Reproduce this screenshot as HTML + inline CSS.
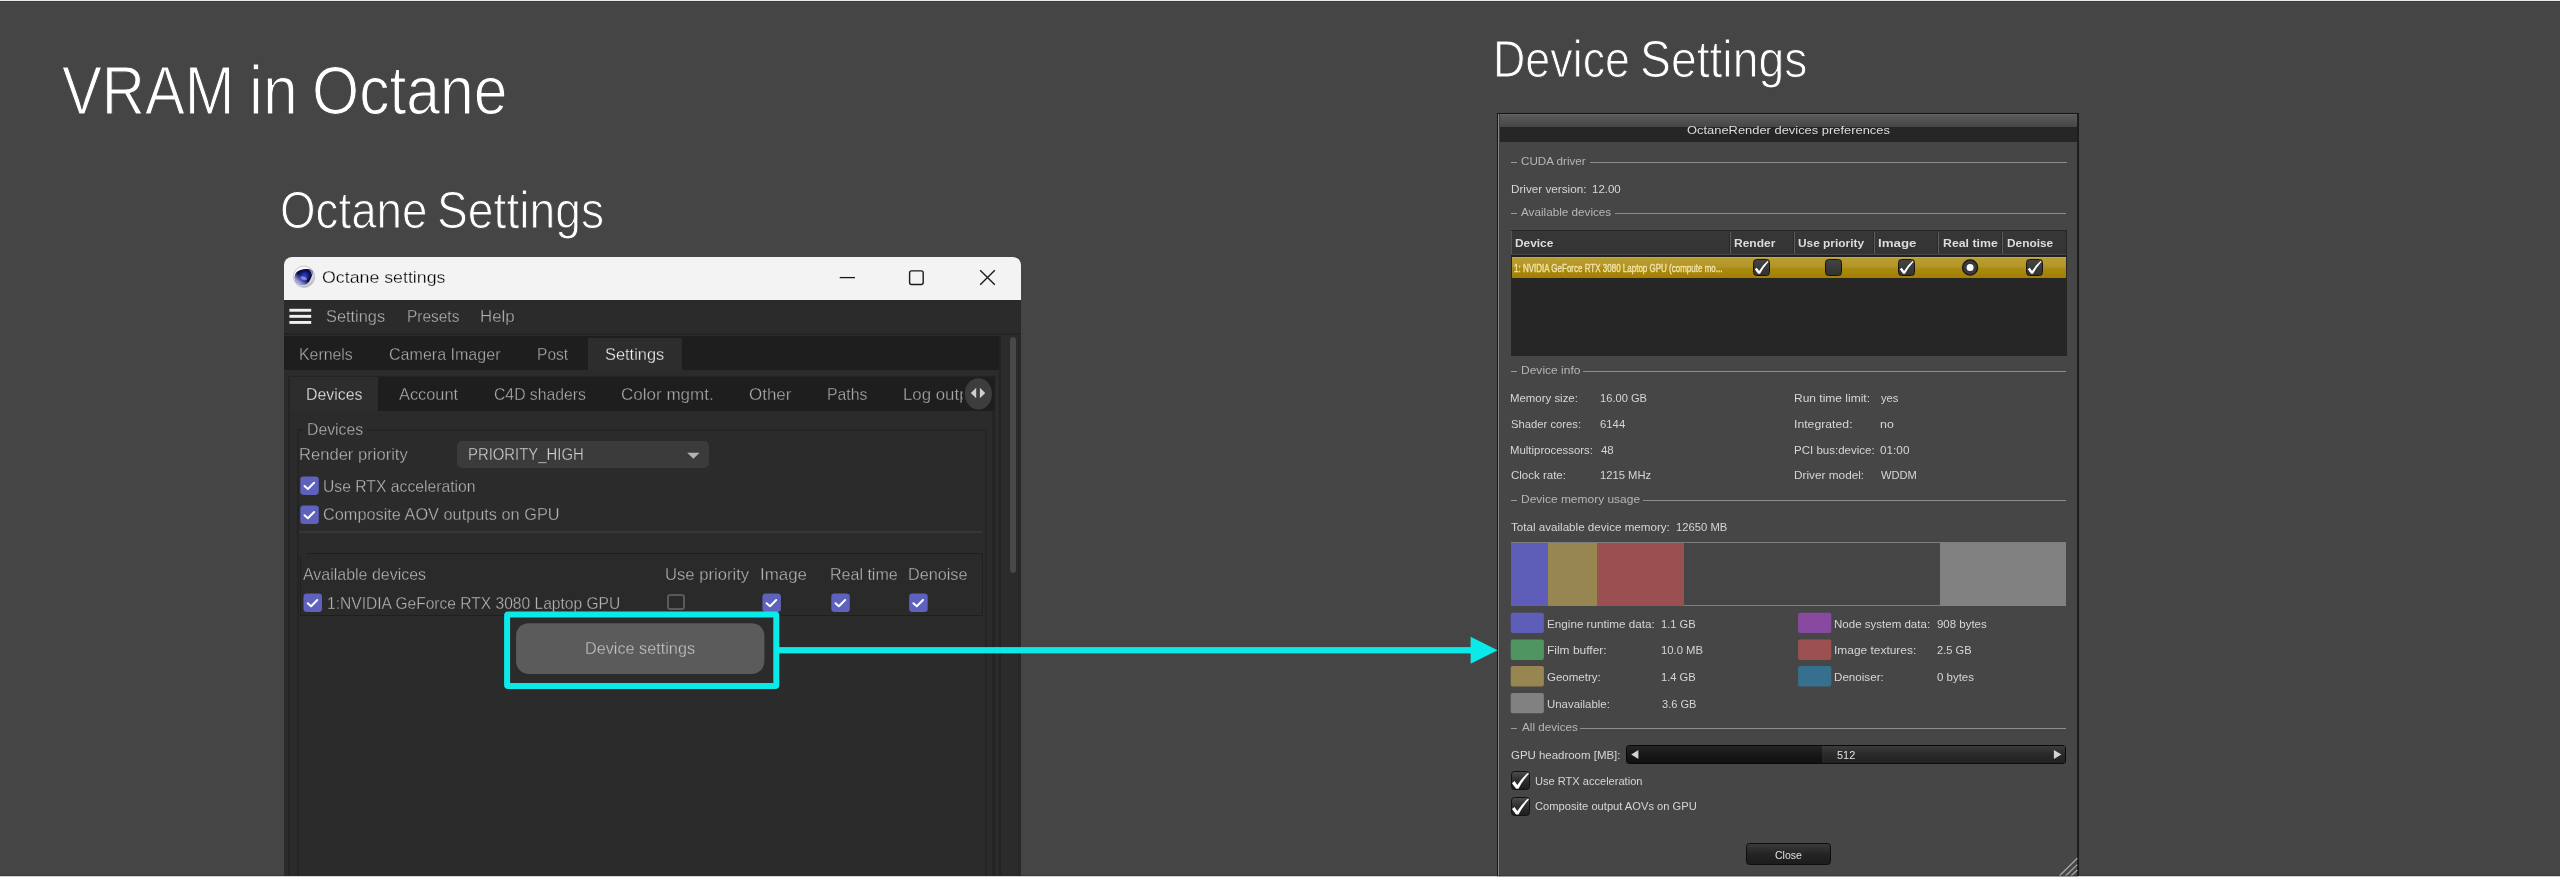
<!DOCTYPE html>
<html lang="en">
<head>
<meta charset="utf-8">
<title>VRAM in Octane</title>
<style>
html,body{margin:0;padding:0;width:2560px;height:877px;overflow:hidden}
body{width:2560px;height:877px;background:#454545;position:relative;overflow:hidden;font-family:"Liberation Sans",sans-serif}
.t{position:absolute;white-space:pre;transform-origin:0 0}
.b{position:absolute}
.fat{-webkit-text-stroke:0.4px #f3e3a6}
.thin3{-webkit-text-stroke:1.2px #454545}
.thin2{-webkit-text-stroke:1px #454545}
.cb{position:absolute;width:19px;height:19px;border-radius:3.5px;background:#5f62bd}
.cb svg{position:absolute;left:0;top:0}
.sw{position:absolute;width:33.4px;height:20.6px;border-radius:2px}
.sec{position:absolute;height:1.4px;background:#8e8e8e}
.dash{position:absolute;height:1.4px;width:6.4px;left:1510.6px;background:#9a9a9a}
.ocb{position:absolute;width:17px;height:16.6px;border-radius:3.5px;background:linear-gradient(#444 0,#3a3a3a 50%,#333 100%);border:1px solid #141414;box-sizing:border-box}
.ocb svg{position:absolute;left:-1px;top:-1px}
.vs{position:absolute;top:232px;height:22px;width:1.2px;background:#5c5c5c;box-shadow:-1px 0 0 #2a2a2a}
</style>
</head>
<body>
<!-- top edge -->
<div class="b" style="left:0;top:0;width:2560px;height:1px;background:#e9e9e9"></div>
<div class="b" style="left:0;top:1px;width:2560px;height:1px;background:#3a3a3a"></div>

<!-- ================= LEFT WINDOW ================= -->
<div class="b" id="win" style="left:284px;top:257px;width:737px;height:620px;background:#2b2b2b;border-radius:8px 8px 0 0;overflow:hidden">
  <div class="b" style="left:0;top:0;width:737px;height:43px;background:#f3f3f3"></div>
  <div class="b" style="left:0;top:76px;width:737px;height:1.5px;background:#242424"></div>
  <!-- tab bar 1 -->
  <div class="b" style="left:0;top:79px;width:717px;height:33.5px;background:#1e1e1e"></div>
  <div class="b" style="left:304px;top:81px;width:94.3px;height:31.5px;background:#2d2d2d"></div>
  <!-- inner panel -->
  <div class="b" style="left:4px;top:119px;width:707px;height:510px;background:#2b2b2b;border:2px solid #242424;box-sizing:border-box"></div>
  <div class="b" style="left:5.5px;top:119.5px;width:705px;height:34px;background:#1e1e1e"></div>
  <div class="b" style="left:5.5px;top:119.5px;width:88.7px;height:34px;background:#2d2d2d"></div>
  <!-- group box -->
  <div class="b" style="left:13px;top:172px;width:690px;height:460px;border:2px solid #242424;box-sizing:border-box"></div>
  <div class="b" style="left:18.5px;top:170px;width:64px;height:6px;background:#2b2b2b"></div>
  <!-- dropdown -->
  <div class="b" style="left:173px;top:183.7px;width:252px;height:27.3px;background:#3b3b3b;border-radius:5px"></div>
  <svg class="b" style="left:402px;top:194px" width="16" height="10" viewBox="0 0 16 10"><path d="M1.2 1.8 L13.6 1.8 L7.4 7.8 Z" fill="#b4b4b4"/></svg>
  <!-- separator -->
  <div class="b" style="left:15px;top:274.3px;width:683px;height:1.4px;background:#363636"></div>
  <!-- nested group -->
  <div class="b" style="left:15.5px;top:295.5px;width:683px;height:63.5px;border:1px solid #212121;border-top-color:#1e1e1e;border-bottom:1.4px solid #1f1f1f;box-sizing:border-box;background:#2a2a2a"></div>
  <div class="b" style="left:15.5px;top:294px;width:6px;height:4px;background:#2b2b2b"></div>
  <!-- unchecked box -->
  <div class="b" style="left:382.7px;top:337.3px;width:18px;height:16.2px;border:2.2px solid #5a5a5a;border-radius:3px;box-sizing:border-box"></div>
  <!-- button -->
  <svg class="b" style="left:230px;top:360px" width="260" height="64" viewBox="0 0 260 64"><rect x="2.1" y="6.2" width="248.3" height="50.8" rx="12.5" fill="#5b5b5b"/></svg>
  <!-- scrollbar -->
  <div class="b" style="left:715px;top:79px;width:1.5px;height:541px;background:#232323"></div>
  <div class="b" style="left:734px;top:79px;width:3px;height:541px;background:#292929"></div>
  <div class="b" style="left:725.8px;top:79.5px;width:6.3px;height:236.2px;background:#494949;border-radius:3.2px"></div>
  <!-- vertical subtle lines -->
  <div class="b" style="left:708.2px;top:154px;width:1.3px;height:470px;background:#252525"></div>
</div>
<!-- checkboxes (page coords) -->
<svg class="b" style="left:290px;top:470px" width="650" height="150" viewBox="0 0 650 150">
<g transform="translate(10.3 6.4)"><rect width="18.5" height="18.5" rx="3.3" fill="#5f62bd"/><path d="M4.2 9.6 L7.6 12.6 L13.8 6.4" fill="none" stroke="#fff" stroke-width="2" stroke-linecap="round" stroke-linejoin="round"/></g>
<g transform="translate(10.3 35.6)"><rect width="18.5" height="18.5" rx="3.3" fill="#5f62bd"/><path d="M4.2 9.6 L7.6 12.6 L13.8 6.4" fill="none" stroke="#fff" stroke-width="2" stroke-linecap="round" stroke-linejoin="round"/></g>
<g transform="translate(13.5 123.6)"><rect width="18.5" height="18.5" rx="3.3" fill="#5f62bd"/><path d="M4.2 9.6 L7.6 12.6 L13.8 6.4" fill="none" stroke="#fff" stroke-width="2" stroke-linecap="round" stroke-linejoin="round"/></g>
<g transform="translate(472.4 123.6)"><rect width="18.5" height="18.5" rx="3.3" fill="#5f62bd"/><path d="M4.2 9.6 L7.6 12.6 L13.8 6.4" fill="none" stroke="#fff" stroke-width="2" stroke-linecap="round" stroke-linejoin="round"/></g>
<g transform="translate(541.3 123.6)"><rect width="18.5" height="18.5" rx="3.3" fill="#5f62bd"/><path d="M4.2 9.6 L7.6 12.6 L13.8 6.4" fill="none" stroke="#fff" stroke-width="2" stroke-linecap="round" stroke-linejoin="round"/></g>
<g transform="translate(619.2 123.6)"><rect width="18.5" height="18.5" rx="3.3" fill="#5f62bd"/><path d="M4.2 9.6 L7.6 12.6 L13.8 6.4" fill="none" stroke="#fff" stroke-width="2" stroke-linecap="round" stroke-linejoin="round"/></g>
</svg>

<!-- window icons -->
<svg class="b" style="left:284px;top:257px" width="737" height="80" viewBox="0 0 737 80">
  <defs>
    <radialGradient id="g1" cx="0.36" cy="0.28" r="0.85"><stop offset="0" stop-color="#ffffff"/><stop offset="0.5" stop-color="#f4f4f8"/><stop offset="0.8" stop-color="#c6c6cf"/><stop offset="1" stop-color="#a4a4b0"/></radialGradient>
    <radialGradient id="g2" cx="0.55" cy="0.44" r="0.6"><stop offset="0" stop-color="#3040c4"/><stop offset="0.3" stop-color="#1d2698"/><stop offset="0.62" stop-color="#090a36"/><stop offset="0.85" stop-color="#0c0e48"/><stop offset="1" stop-color="#23257a"/></radialGradient>
    <linearGradient id="g3" x1="1" y1="0" x2="0.1" y2="1"><stop offset="0.55" stop-color="#9a9af0" stop-opacity="0"/><stop offset="0.85" stop-color="#a4a4f4" stop-opacity="0.95"/><stop offset="1" stop-color="#c8c8ff"/></linearGradient>
    <filter id="bl" x="-20%" y="-20%" width="140%" height="140%"><feGaussianBlur stdDeviation="0.35"/></filter>
    <filter id="bl2" x="-50%" y="-50%" width="200%" height="200%"><feGaussianBlur stdDeviation="0.7"/></filter>
  </defs>
  <g filter="url(#bl)">
  <circle cx="20" cy="19.7" r="10.7" fill="url(#g1)" stroke="#b9b9c4" stroke-width="0.7"/>
  <path id="blob" d="M10.7 20.4 C10.6 16.8 12.6 14.6 15.2 13.4 C18 12.2 21 11.9 23.6 11.9 C25.6 11.9 27.4 12.8 28.5 14.2 C28.6 16.4 28.2 18 27.6 19.6 C26.9 21.8 26 23.8 24.4 25.4 C22.8 26.9 21 27.6 19.2 27.6 C16.4 27.7 14 27 12.5 25.4 C11.4 24.2 10.8 22.4 10.7 20.4 Z" fill="url(#g2)"/>
  <path d="M10.7 20.4 C10.6 16.8 12.6 14.6 15.2 13.4 C18 12.2 21 11.9 23.6 11.9 C25.6 11.9 27.4 12.8 28.5 14.2 C28.6 16.4 28.2 18 27.6 19.6 C26.9 21.8 26 23.8 24.4 25.4 C22.8 26.9 21 27.6 19.2 27.6 C16.4 27.7 14 27 12.5 25.4 C11.4 24.2 10.8 22.4 10.7 20.4 Z" fill="url(#g3)"/>
  <path d="M24.6 12.2 C26.6 12.6 28 13.4 28.4 14.4 C28.5 16 28.2 17.4 27.8 18.6 C27.4 16 26.4 13.8 24.6 12.2Z" fill="#8d8fe2" opacity="0.9"/>
  </g>
  <ellipse cx="19.8" cy="21.3" rx="3.2" ry="1.7" transform="rotate(22 19.8 21.3)" fill="#7f8cf0" filter="url(#bl2)"/>
  <!-- min / max / close -->
  <path d="M555.7 20.6 H571" stroke="#1a1a1a" stroke-width="1.3" fill="none"/>
  <rect x="625.6" y="13.9" width="13.6" height="13.6" rx="2" fill="none" stroke="#1a1a1a" stroke-width="1.4"/>
  <path d="M696.2 13.2 L710.8 27.8 M710.8 13.2 L696.2 27.8" stroke="#1a1a1a" stroke-width="1.4" fill="none"/>
  <!-- hamburger -->
  <rect x="5.4" y="51.8" width="21.8" height="2.9" fill="#f0f0f0"/>
  <rect x="5.4" y="57.9" width="21.8" height="2.9" fill="#f0f0f0"/>
  <rect x="5.4" y="64" width="21.8" height="2.9" fill="#f0f0f0"/>
</svg>
<!-- scroll tab button + clipped "Log outp" -->
<div class="b" style="left:890px;top:377px;width:73.3px;height:34px;overflow:hidden;will-change:transform"><span class="t" style="left:13.4px;top:6px;font-size:16.6px;line-height:23px;color:#aaaaaa;-webkit-text-stroke:0.3px #1e1e1e;transform:scaleX(1.014)">Log output</span></div>
<svg class="b" style="left:962px;top:376px" width="34" height="36" viewBox="0 0 34 36">
  <ellipse cx="16.4" cy="17.9" rx="13.6" ry="15.6" fill="#3d3d3d"/>
  <path d="M8.8 17 L14.2 11.8 L14.2 22.2 Z" fill="#cfcfcf"/>
  <path d="M23.2 17 L17.9 11.8 L17.9 22.2 Z" fill="#cfcfcf"/>
</svg>

<!-- ================= RIGHT PANEL ================= -->
<div class="b" style="left:1497px;top:113px;width:581.5px;height:764px;background:#464646;border:1px solid #151515;border-right:2px solid #1d1d1d;border-bottom:none;box-sizing:border-box"></div>
<div class="b" style="left:1498px;top:114px;width:1px;height:763px;background:#8a8a8a"></div>
<div class="b" style="left:1499px;top:114px;width:1px;height:763px;background:#3e3e3e"></div>
<div class="b" style="left:1500px;top:114px;width:576.5px;height:13.2px;background:linear-gradient(#6c6c6c 0,#5a5a5a 9%,#464646 100%)"></div>
<div class="b" style="left:1500px;top:127.2px;width:576.5px;height:14.6px;background:#262626"></div>
<!-- section rules -->
<div class="dash" style="top:161.6px"></div><div class="sec" style="left:1589.5px;top:161.6px;width:477px"></div>
<div class="dash" style="top:213px"></div><div class="sec" style="left:1614.7px;top:213px;width:451.8px"></div>
<div class="dash" style="top:370.8px"></div><div class="sec" style="left:1583.4px;top:370.8px;width:483px"></div>
<div class="dash" style="top:499.5px"></div><div class="sec" style="left:1642.6px;top:499.5px;width:423.9px"></div>
<div class="dash" style="top:727.9px"></div><div class="sec" style="left:1580.4px;top:727.9px;width:486px"></div>
<!-- table -->
<div class="b" style="left:1510.5px;top:230px;width:556px;height:125.5px;background:#262626"></div>
<div class="b" style="left:1511px;top:231px;width:555.3px;height:23px;background:linear-gradient(#373737,#343434)"></div>
<div class="b" style="left:1511px;top:231px;width:1.2px;height:24px;background:#585858"></div>
<div class="b" style="left:1511px;top:254px;width:555.3px;height:1px;background:#474747"></div>
<div class="b" style="left:1511px;top:255px;width:555.3px;height:2px;background:#202020"></div>
<div class="b" style="left:1511.7px;top:256.8px;width:554.6px;height:21.2px;background:linear-gradient(#cdb352 0,#b99d2e 6%,#b3962a 45%,#aa8a10 55%,#a27f02 100%)"></div>
<div class="vs" style="left:1729.5px"></div><div class="vs" style="left:1793.5px"></div><div class="vs" style="left:1873.5px"></div><div class="vs" style="left:1937.7px"></div><div class="vs" style="left:2001.7px"></div>
<div class="ocb" style="left:1753.2px;top:259.2px"><svg width="17" height="17" viewBox="-1.2 -0.6 21 21"><path d="M1 12.2 L3.5 10.1 L6.3 14.1 Q11 6.6 17.1 1.7 L17.9 2.7 Q11.6 9.6 7.5 17.7 L5.1 17.7 Z" fill="#fff"/></svg></div>
<div class="ocb" style="left:1825px;top:259.2px"></div>
<div class="ocb" style="left:1897.5px;top:259.2px"><svg width="17" height="17" viewBox="-1.2 -0.6 21 21"><path d="M1 12.2 L3.5 10.1 L6.3 14.1 Q11 6.6 17.1 1.7 L17.9 2.7 Q11.6 9.6 7.5 17.7 L5.1 17.7 Z" fill="#fff"/></svg></div>
<div class="ocb" style="left:2025.7px;top:259.2px"><svg width="17" height="17" viewBox="-1.2 -0.6 21 21"><path d="M1 12.2 L3.5 10.1 L6.3 14.1 Q11 6.6 17.1 1.7 L17.9 2.7 Q11.6 9.6 7.5 17.7 L5.1 17.7 Z" fill="#fff"/></svg></div>
<svg class="b" style="left:1960px;top:258px" width="20" height="20" viewBox="0 0 20 20"><circle cx="10.1" cy="9.5" r="7.6" fill="#3a3a3a" stroke="#141414" stroke-width="1.2"/><circle cx="10.1" cy="9.5" r="3.5" fill="#fff"/></svg>
<!-- memory bar -->
<div class="b" style="left:1510.6px;top:542.2px;width:555.9px;height:63.4px;background:#454545;border-top:1.2px solid #7e7e7e;border-bottom:1.2px solid #7e7e7e;box-sizing:border-box"></div>
<div class="b" style="left:1510.6px;top:542.6px;width:37.1px;height:63px;background:#5e5eb8"></div>
<div class="b" style="left:1547.7px;top:542.6px;width:49.5px;height:63px;background:#978651"></div>
<div class="b" style="left:1597.2px;top:542.6px;width:86.6px;height:63px;background:#9a5050"></div>
<div class="b" style="left:1940.3px;top:542.6px;width:126.2px;height:63px;background:#818181"></div>
<!-- legend swatches -->
<svg class="b" style="left:1500px;top:600px" width="340" height="120" viewBox="0 0 340 120">
<rect x="10.7" y="12.7" width="33.2" height="20.2" rx="2" fill="#5e5eb8"/><rect x="10.7" y="39.4" width="33.2" height="20.5" rx="2" fill="#4f9561"/><rect x="10.7" y="66.1" width="33.2" height="20.3" rx="2" fill="#978651"/><rect x="10.7" y="92.9" width="33.2" height="20.3" rx="2" fill="#818181"/><rect x="298.1" y="12.7" width="33.2" height="20.2" rx="2" fill="#8849a0"/><rect x="298.1" y="39.4" width="33.2" height="20.5" rx="2" fill="#9c5050"/><rect x="298.1" y="66.1" width="33.2" height="20.3" rx="2" fill="#36708e"/>
</svg>
<!-- slider -->
<div class="b" style="left:1626px;top:745px;width:440px;height:19px;border-radius:3.5px;background:#090909;overflow:hidden">
  <div class="b" style="left:1px;top:1px;width:194.5px;height:17px;background:linear-gradient(#242424 0,#181818 50%,#101010 100%)"></div>
  <div class="b" style="left:195.5px;top:1px;width:243.5px;height:17px;background:linear-gradient(#3b3b3b 0,#2b2b2b 45%,#212121 100%)"></div>
</div>
<svg class="b" style="left:1626px;top:745px" width="441" height="19" viewBox="0 0 441 19"><path d="M5.2 9.5 L12.4 5 L12.4 14 Z" fill="#d4d4d4"/><path d="M435.4 9.5 L427.9 5 L427.9 14 Z" fill="#d4d4d4"/></svg>
<!-- bottom checkboxes -->
<div class="b" style="left:1510.8px;top:771.2px;width:19px;height:18.6px;border-radius:3.5px;background:linear-gradient(#4b4b4b 0,#303030 45%,#1d1d1d 100%);border:1px solid #111;box-sizing:border-box"></div>
<div class="b" style="left:1510.8px;top:797.1px;width:19px;height:18.6px;border-radius:3.5px;background:linear-gradient(#4b4b4b 0,#303030 45%,#1d1d1d 100%);border:1px solid #111;box-sizing:border-box"></div>
<svg class="b" style="left:1511.2px;top:771px" width="20" height="46" viewBox="0 0 20 46"><path d="M1 12.2 L3.5 10.1 L6.3 14.1 Q11 6.6 17.1 1.7 L17.9 2.7 Q11.6 9.6 7.5 17.7 L5.1 17.7 Z" fill="#fff"/><path transform="translate(0 25.9)" d="M1 12.2 L3.5 10.1 L6.3 14.1 Q11 6.6 17.1 1.7 L17.9 2.7 Q11.6 9.6 7.5 17.7 L5.1 17.7 Z" fill="#fff"/></svg>
<!-- close button -->
<div class="b" style="left:1745.8px;top:843.2px;width:85px;height:21.4px;border-radius:3.5px;background:linear-gradient(#3a3a3a 0,#242424 50%,#1c1c1c 100%);border:1px solid #0d0d0d;box-sizing:border-box"></div>
<!-- resize grip -->
<svg class="b" style="left:2056px;top:855px" width="22" height="22" viewBox="0 0 22 22"><path d="M3.3 21 L21.3 3.2 M9.5 21 L21.3 9.6 M15 21 L21.3 15" stroke="#a6a6a6" stroke-width="1.3" fill="none"/></svg>

<!-- ================= TEXT ================= -->
<div id="txt" style="position:absolute;left:0;top:0;width:2560px;height:877px;will-change:transform">
<span class="t thin3" style="left:62.08px;top:50.00px;font-size:69px;line-height:81px;color:#ffffff;transform:scaleX(0.8651)">VRAM</span>
<span class="t thin3" style="left:248.64px;top:50.00px;font-size:69px;line-height:81px;color:#ffffff;transform:scaleX(0.9071)">in</span>
<span class="t thin3" style="left:311.53px;top:50.00px;font-size:69px;line-height:81px;color:#ffffff;transform:scaleX(0.8790)">Octane</span>
<span class="t thin2" style="left:280.01px;top:179.00px;font-size:51.5px;line-height:62px;color:#ffffff;transform:scaleX(0.8882)">Octane</span>
<span class="t thin2" style="left:437.01px;top:179.00px;font-size:51.5px;line-height:62px;color:#ffffff;transform:scaleX(0.8979)">Settings</span>
<span class="t thin2" style="left:1493.16px;top:28.00px;font-size:51.5px;line-height:62px;color:#ffffff;transform:scaleX(0.8702)">Device</span>
<span class="t thin2" style="left:1639.70px;top:28.00px;font-size:51.5px;line-height:62px;color:#ffffff;transform:scaleX(0.8990)">Settings</span>
<span class="t" style="left:322.41px;top:265.00px;font-size:17.3px;line-height:24px;color:#000000;-webkit-text-stroke:0.3px #f3f3f3;transform:scaleX(1.0282)">Octane settings</span>
<span class="t" style="left:326.24px;top:305.00px;font-size:16.6px;line-height:23px;color:#b2b2b2;-webkit-text-stroke:0.3px #2b2b2b;transform:scaleX(0.9856)">Settings</span>
<span class="t" style="left:407.05px;top:305.00px;font-size:16.6px;line-height:23px;color:#b2b2b2;-webkit-text-stroke:0.3px #2b2b2b;transform:scaleX(0.9306)">Presets</span>
<span class="t" style="left:480.43px;top:305.00px;font-size:16.6px;line-height:23px;color:#b2b2b2;-webkit-text-stroke:0.3px #2b2b2b;transform:scaleX(1.0166)">Help</span>
<span class="t" style="left:298.52px;top:343.00px;font-size:16.6px;line-height:23px;color:#aaaaaa;-webkit-text-stroke:0.3px #1e1e1e;transform:scaleX(0.9563)">Kernels</span>
<span class="t" style="left:389.00px;top:343.00px;font-size:16.6px;line-height:23px;color:#aaaaaa;-webkit-text-stroke:0.3px #1e1e1e;transform:scaleX(0.9671)">Camera Imager</span>
<span class="t" style="left:537.44px;top:343.00px;font-size:16.6px;line-height:23px;color:#aaaaaa;-webkit-text-stroke:0.3px #1e1e1e;transform:scaleX(0.9376)">Post</span>
<span class="t" style="left:605.24px;top:343.00px;font-size:16.6px;line-height:23px;color:#f0f0f0;-webkit-text-stroke:0.3px #2d2d2d;transform:scaleX(0.9873)">Settings</span>
<span class="t" style="left:306.21px;top:383.00px;font-size:16.6px;line-height:23px;color:#f0f0f0;-webkit-text-stroke:0.3px #2d2d2d;transform:scaleX(0.9574)">Devices</span>
<span class="t" style="left:399.05px;top:383.00px;font-size:16.6px;line-height:23px;color:#aaaaaa;-webkit-text-stroke:0.3px #1e1e1e;transform:scaleX(0.9860)">Account</span>
<span class="t" style="left:494.02px;top:383.00px;font-size:16.6px;line-height:23px;color:#aaaaaa;-webkit-text-stroke:0.3px #1e1e1e;transform:scaleX(0.9488)">C4D shaders</span>
<span class="t" style="left:621.25px;top:383.00px;font-size:16.6px;line-height:23px;color:#aaaaaa;-webkit-text-stroke:0.3px #1e1e1e;transform:scaleX(1.0260)">Color mgmt.</span>
<span class="t" style="left:748.65px;top:383.00px;font-size:16.6px;line-height:23px;color:#aaaaaa;-webkit-text-stroke:0.3px #1e1e1e;transform:scaleX(1.0209)">Other</span>
<span class="t" style="left:826.52px;top:383.00px;font-size:16.6px;line-height:23px;color:#aaaaaa;-webkit-text-stroke:0.3px #1e1e1e;transform:scaleX(0.9521)">Paths</span>
<span class="t" style="left:306.52px;top:418.00px;font-size:16.6px;line-height:23px;color:#b4b4b4;-webkit-text-stroke:0.3px #2b2b2b;transform:scaleX(0.9521)">Devices</span>
<span class="t" style="left:298.85px;top:443.00px;font-size:16.6px;line-height:23px;color:#b4b4b4;-webkit-text-stroke:0.3px #2b2b2b;transform:scaleX(0.9994)">Render priority</span>
<span class="t" style="left:468.30px;top:443.00px;font-size:16.6px;line-height:23px;color:#d0d0d0;-webkit-text-stroke:0.3px #3b3b3b;transform:scaleX(0.8964)">PRIORITY_HIGH</span>
<span class="t" style="left:322.78px;top:475.00px;font-size:16.6px;line-height:23px;color:#b4b4b4;-webkit-text-stroke:0.3px #2b2b2b;transform:scaleX(0.9466)">Use RTX acceleration</span>
<span class="t" style="left:322.99px;top:503.00px;font-size:16.6px;line-height:23px;color:#b4b4b4;-webkit-text-stroke:0.3px #2b2b2b;transform:scaleX(0.9826)">Composite AOV outputs on GPU</span>
<span class="t" style="left:303.06px;top:563.00px;font-size:16.6px;line-height:23px;color:#b4b4b4;-webkit-text-stroke:0.3px #2b2b2b;transform:scaleX(0.9619)">Available devices</span>
<span class="t" style="left:664.71px;top:563.00px;font-size:16.6px;line-height:23px;color:#b4b4b4;-webkit-text-stroke:0.3px #2b2b2b;transform:scaleX(1.0024)">Use priority</span>
<span class="t" style="left:760.43px;top:563.00px;font-size:16.6px;line-height:23px;color:#b4b4b4;-webkit-text-stroke:0.3px #2b2b2b;transform:scaleX(1.0190)">Image</span>
<span class="t" style="left:830.00px;top:563.00px;font-size:16.6px;line-height:23px;color:#b4b4b4;-webkit-text-stroke:0.3px #2b2b2b;transform:scaleX(0.9655)">Real time</span>
<span class="t" style="left:907.99px;top:563.00px;font-size:16.6px;line-height:23px;color:#b4b4b4;-webkit-text-stroke:0.3px #2b2b2b;transform:scaleX(0.9772)">Denoise</span>
<span class="t" style="left:327.29px;top:592.00px;font-size:16.6px;line-height:23px;color:#b4b4b4;-webkit-text-stroke:0.3px #2b2b2b;transform:scaleX(0.9387)">1:NVIDIA GeForce RTX 3080 Laptop GPU</span>
<span class="t" style="left:584.89px;top:637.00px;font-size:16.6px;line-height:23px;color:#c4c4c4;-webkit-text-stroke:0.3px #5b5b5b;transform:scaleX(0.9779)">Device settings</span>
<span class="t" style="left:1686.90px;top:122.00px;font-size:11.6px;line-height:16px;color:#dedede;transform:scaleX(1.1125)">OctaneRender devices preferences</span>
<span class="t" style="left:1520.55px;top:153.00px;font-size:11.6px;line-height:16px;color:#b6b6b6;transform:scaleX(1.0032)">CUDA driver</span>
<span class="t" style="left:1510.59px;top:181.00px;font-size:11.6px;line-height:16px;color:#d6d6d6;transform:scaleX(1.0094)">Driver version:</span>
<span class="t" style="left:1591.78px;top:181.00px;font-size:11.6px;line-height:16px;color:#d6d6d6;transform:scaleX(0.9888)">12.00</span>
<span class="t" style="left:1521.10px;top:204.00px;font-size:11.6px;line-height:16px;color:#b6b6b6;transform:scaleX(1.0095)">Available devices</span>
<span class="t" style="left:1515.26px;top:234.00px;font-size:11.8px;line-height:18px;color:#dcdcdc;font-weight:700;transform:scaleX(1.0076)">Device</span>
<span class="t" style="left:1734.15px;top:234.00px;font-size:11.8px;line-height:18px;color:#dcdcdc;font-weight:700;transform:scaleX(1.0189)">Render</span>
<span class="t" style="left:1798.44px;top:234.00px;font-size:11.8px;line-height:18px;color:#dcdcdc;font-weight:700;transform:scaleX(1.0077)">Use priority</span>
<span class="t" style="left:1877.87px;top:234.00px;font-size:11.8px;line-height:18px;color:#dcdcdc;font-weight:700;transform:scaleX(1.1278)">Image</span>
<span class="t" style="left:1942.73px;top:234.00px;font-size:11.8px;line-height:18px;color:#dcdcdc;font-weight:700;transform:scaleX(1.0440)">Real time</span>
<span class="t" style="left:2006.56px;top:234.00px;font-size:11.8px;line-height:18px;color:#dcdcdc;font-weight:700;transform:scaleX(1.0073)">Denoise</span>
<span class="t fat" style="left:1514.14px;top:260.00px;font-size:11.2px;line-height:16px;color:#f1e2a8;transform:scaleX(0.7153)">1: NVIDIA GeForce RTX 3080 Laptop GPU (compute mo...</span>
<span class="t" style="left:1520.96px;top:362.00px;font-size:11.6px;line-height:16px;color:#b6b6b6;transform:scaleX(1.0374)">Device info</span>
<span class="t" style="left:1510.41px;top:390.00px;font-size:11.6px;line-height:16px;color:#d6d6d6;transform:scaleX(0.9849)">Memory size:</span>
<span class="t" style="left:1600.20px;top:390.00px;font-size:11.6px;line-height:16px;color:#d6d6d6;transform:scaleX(0.9603)">16.00 GB</span>
<span class="t" style="left:1793.56px;top:390.00px;font-size:11.6px;line-height:16px;color:#d6d6d6;transform:scaleX(1.0346)">Run time limit:</span>
<span class="t" style="left:1880.70px;top:390.00px;font-size:11.6px;line-height:16px;color:#d6d6d6;transform:scaleX(0.9667)">yes</span>
<span class="t" style="left:1510.95px;top:416.00px;font-size:11.6px;line-height:16px;color:#d6d6d6;transform:scaleX(0.9703)">Shader cores:</span>
<span class="t" style="left:1600.37px;top:416.00px;font-size:11.6px;line-height:16px;color:#d6d6d6;transform:scaleX(0.9771)">6144</span>
<span class="t" style="left:1793.54px;top:416.00px;font-size:11.6px;line-height:16px;color:#d6d6d6;transform:scaleX(1.0559)">Integrated:</span>
<span class="t" style="left:1879.93px;top:416.00px;font-size:11.6px;line-height:16px;color:#d6d6d6;transform:scaleX(1.0677)">no</span>
<span class="t" style="left:1510.41px;top:442.00px;font-size:11.6px;line-height:16px;color:#d6d6d6;transform:scaleX(0.9831)">Multiprocessors:</span>
<span class="t" style="left:1600.72px;top:442.00px;font-size:11.6px;line-height:16px;color:#d6d6d6;transform:scaleX(0.9876)">48</span>
<span class="t" style="left:1793.60px;top:442.00px;font-size:11.6px;line-height:16px;color:#d6d6d6;transform:scaleX(0.9926)">PCI bus:device:</span>
<span class="t" style="left:1880.33px;top:442.00px;font-size:11.6px;line-height:16px;color:#d6d6d6;transform:scaleX(1.0149)">01:00</span>
<span class="t" style="left:1510.76px;top:467.00px;font-size:11.6px;line-height:16px;color:#d6d6d6;transform:scaleX(0.9917)">Clock rate:</span>
<span class="t" style="left:1600.20px;top:467.00px;font-size:11.6px;line-height:16px;color:#d6d6d6;transform:scaleX(0.9690)">1215 MHz</span>
<span class="t" style="left:1793.58px;top:467.00px;font-size:11.6px;line-height:16px;color:#d6d6d6;transform:scaleX(1.0176)">Driver model:</span>
<span class="t" style="left:1880.70px;top:467.00px;font-size:11.6px;line-height:16px;color:#d6d6d6;transform:scaleX(0.9567)">WDDM</span>
<span class="t" style="left:1520.56px;top:491.00px;font-size:11.6px;line-height:16px;color:#b6b6b6;transform:scaleX(1.0322)">Device memory usage</span>
<span class="t" style="left:1511.12px;top:519.00px;font-size:11.6px;line-height:16px;color:#d6d6d6;transform:scaleX(1.0021)">Total available device memory:</span>
<span class="t" style="left:1676.20px;top:519.00px;font-size:11.6px;line-height:16px;color:#d6d6d6;transform:scaleX(0.9697)">12650 MB</span>
<span class="t" style="left:1546.89px;top:616.00px;font-size:11.6px;line-height:16px;color:#d6d6d6;transform:scaleX(1.0077)">Engine runtime data:</span>
<span class="t" style="left:1661.40px;top:616.00px;font-size:11.6px;line-height:16px;color:#d6d6d6;transform:scaleX(0.9629)">1.1 GB</span>
<span class="t" style="left:1546.87px;top:642.00px;font-size:11.6px;line-height:16px;color:#d6d6d6;transform:scaleX(1.0314)">Film buffer:</span>
<span class="t" style="left:1661.39px;top:642.00px;font-size:11.6px;line-height:16px;color:#d6d6d6;transform:scaleX(0.9741)">10.0 MB</span>
<span class="t" style="left:1547.26px;top:669.00px;font-size:11.6px;line-height:16px;color:#d6d6d6;transform:scaleX(0.9932)">Geometry:</span>
<span class="t" style="left:1661.40px;top:669.00px;font-size:11.6px;line-height:16px;color:#d6d6d6;transform:scaleX(0.9629)">1.4 GB</span>
<span class="t" style="left:1547.09px;top:696.00px;font-size:11.6px;line-height:16px;color:#d6d6d6;transform:scaleX(0.9844)">Unavailable:</span>
<span class="t" style="left:1661.75px;top:696.00px;font-size:11.6px;line-height:16px;color:#d6d6d6;transform:scaleX(0.9530)">3.6 GB</span>
<span class="t" style="left:1834.00px;top:616.00px;font-size:11.6px;line-height:16px;color:#d6d6d6;transform:scaleX(0.9941)">Node system data:</span>
<span class="t" style="left:1936.96px;top:616.00px;font-size:11.6px;line-height:16px;color:#d6d6d6;transform:scaleX(0.9879)">908 bytes</span>
<span class="t" style="left:1833.97px;top:642.00px;font-size:11.6px;line-height:16px;color:#d6d6d6;transform:scaleX(1.0296)">Image textures:</span>
<span class="t" style="left:1936.98px;top:642.00px;font-size:11.6px;line-height:16px;color:#d6d6d6;transform:scaleX(0.9579)">2.5 GB</span>
<span class="t" style="left:1833.99px;top:669.00px;font-size:11.6px;line-height:16px;color:#d6d6d6;transform:scaleX(1.0023)">Denoiser:</span>
<span class="t" style="left:1937.14px;top:669.00px;font-size:11.6px;line-height:16px;color:#d6d6d6;transform:scaleX(0.9871)">0 bytes</span>
<span class="t" style="left:1521.50px;top:719.00px;font-size:11.6px;line-height:16px;color:#b6b6b6;transform:scaleX(1.0076)">All devices</span>
<span class="t" style="left:1510.56px;top:747.00px;font-size:11.6px;line-height:16px;color:#d6d6d6;transform:scaleX(0.9872)">GPU headroom [MB]:</span>
<span class="t" style="left:1837.16px;top:747.00px;font-size:11.6px;line-height:16px;color:#e0e0e0;transform:scaleX(0.9448)">512</span>
<span class="t" style="left:1535.11px;top:773.00px;font-size:11.6px;line-height:16px;color:#d6d6d6;transform:scaleX(0.9547)">Use RTX acceleration</span>
<span class="t" style="left:1535.28px;top:798.00px;font-size:11.6px;line-height:16px;color:#d6d6d6;transform:scaleX(0.9617)">Composite output AOVs on GPU</span>
<span class="t" style="left:1775.01px;top:847.00px;font-size:11.6px;line-height:16px;color:#e0e0e0;transform:scaleX(0.9077)">Close</span>
</div>

<!-- ================= CYAN HIGHLIGHT + ARROW ================= -->
<svg class="b" style="left:500px;top:600px" width="1010" height="100" viewBox="0 0 1010 100">
  <rect x="7.1" y="14.4" width="269.2" height="71.5" rx="1" fill="none" stroke="#0be9e9" stroke-width="6" stroke-linejoin="round"/>
  <rect x="279" y="47.1" width="693" height="6.3" fill="#0be9e9"/>
  <path d="M970.6 36.7 L997.6 50.25 L970.6 63.8 Z" fill="#0be9e9"/>
</svg>
<!-- bottom edge -->
<div class="b" style="left:0;top:875px;width:2560px;height:1px;background:rgba(40,40,40,0.35)"></div>
<div class="b" style="left:0;top:876px;width:2560px;height:1px;background:#d4d4d4"></div>
<div class="b" style="left:1497px;top:876px;width:581px;height:1px;background:#a2a2a2"></div>
</body>
</html>
